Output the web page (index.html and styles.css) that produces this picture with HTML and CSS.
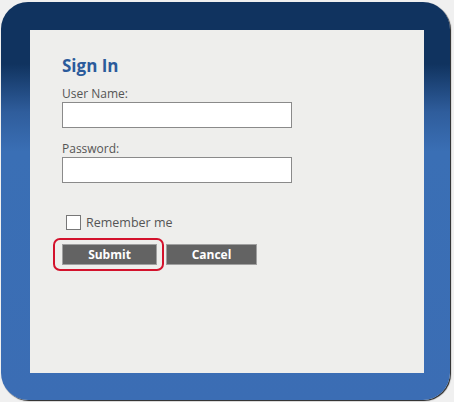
FILE: index.html
```html
<html>
    <head>
        <meta name="viewport" content="width=device-width, initial-scale=1" />
        <link rel="stylesheet" href="styles.css">
    </head>
    <body>
        <div class="frame">
            <div class="panel">
                <h1 class="title">Sign In</h1>
                <label class="field-label" for="user">User Name:</label>
                <input class="field" id="user" type="text">
                <label class="field-label" for="pass">Password:</label>
                <input class="field" id="pass" type="password">
                <div class="remember">
                    <span class="check"></span>
                    <span>Remember me</span>
                </div>
                <div class="actions">
                    <div class="focus-ring"><button class="btn">Submit</button></div>
                    <button class="btn btn-cancel">Cancel</button>
                </div>
            </div>
        </div>
    </body>
</html>
```

FILE: styles.css
```css
body {
    margin: 0;
    background-color: #f0f0f0;
    font-family: 'Open Sans', 'Liberation Sans', sans-serif;
}

.frame {
    margin: 2px 0 0 1px;
    width: 449px;
    height: 398px;
    box-sizing: border-box;
    padding: 28px 26px 27px 29px;
    border-radius: 27px;
    background: linear-gradient(to bottom, #10335f 0, #10335f 62px, #2f5d9c 110px, #3a6fb5 150px, #3b6db4 100%);
    box-shadow: 1px 1px 1px #222;
}
.panel {
    height: 100%;
    background: #eeeeec;
    padding: 24px 0 0 32px;
    box-sizing: border-box;
}
.title {
    margin: 0 0 7px 0;
    font-size: 17px;
    font-weight: bold;
    color: #2b5b9b;
    line-height: 24px;
}
.field-label {
    display: block;
    font-size: 12px;
    color: #555;
    line-height: 17px;
}
.field {
    display: block;
    width: 230px;
    height: 26px;
    box-sizing: border-box;
    margin: 0 0 12px 0;
    border: 1px solid #8a8a8a;
    background: #fff;
}
.remember {
    display: flex;
    align-items: center;
    height: 17px;
    margin: 31px 0 0 4px;
    font-size: 12.5px;
    color: #555;
}
.check {
    width: 15px;
    height: 15px;
    box-sizing: border-box;
    border: 1px solid #777;
    background: #fff;
    margin-right: 5px;
}
.actions {
    display: flex;
    align-items: center;
    margin: 7px 0 0 -9px;
}
.focus-ring {
    padding: 4px 5px 4px 7px;
    border: 2px solid #d3122c;
    border-radius: 7px;
    margin-right: 2px;
}
.btn {
    display: block;
    width: 95px;
    height: 21px;
    padding: 0;
    background: #636363;
    border: 1px solid #a0a0a0;
    color: #fff;
    font-family: 'Open Sans', 'Liberation Sans', sans-serif;
    font-weight: bold;
    font-size: 12px;
}
.btn-cancel {
    width: 91px;
}
```
